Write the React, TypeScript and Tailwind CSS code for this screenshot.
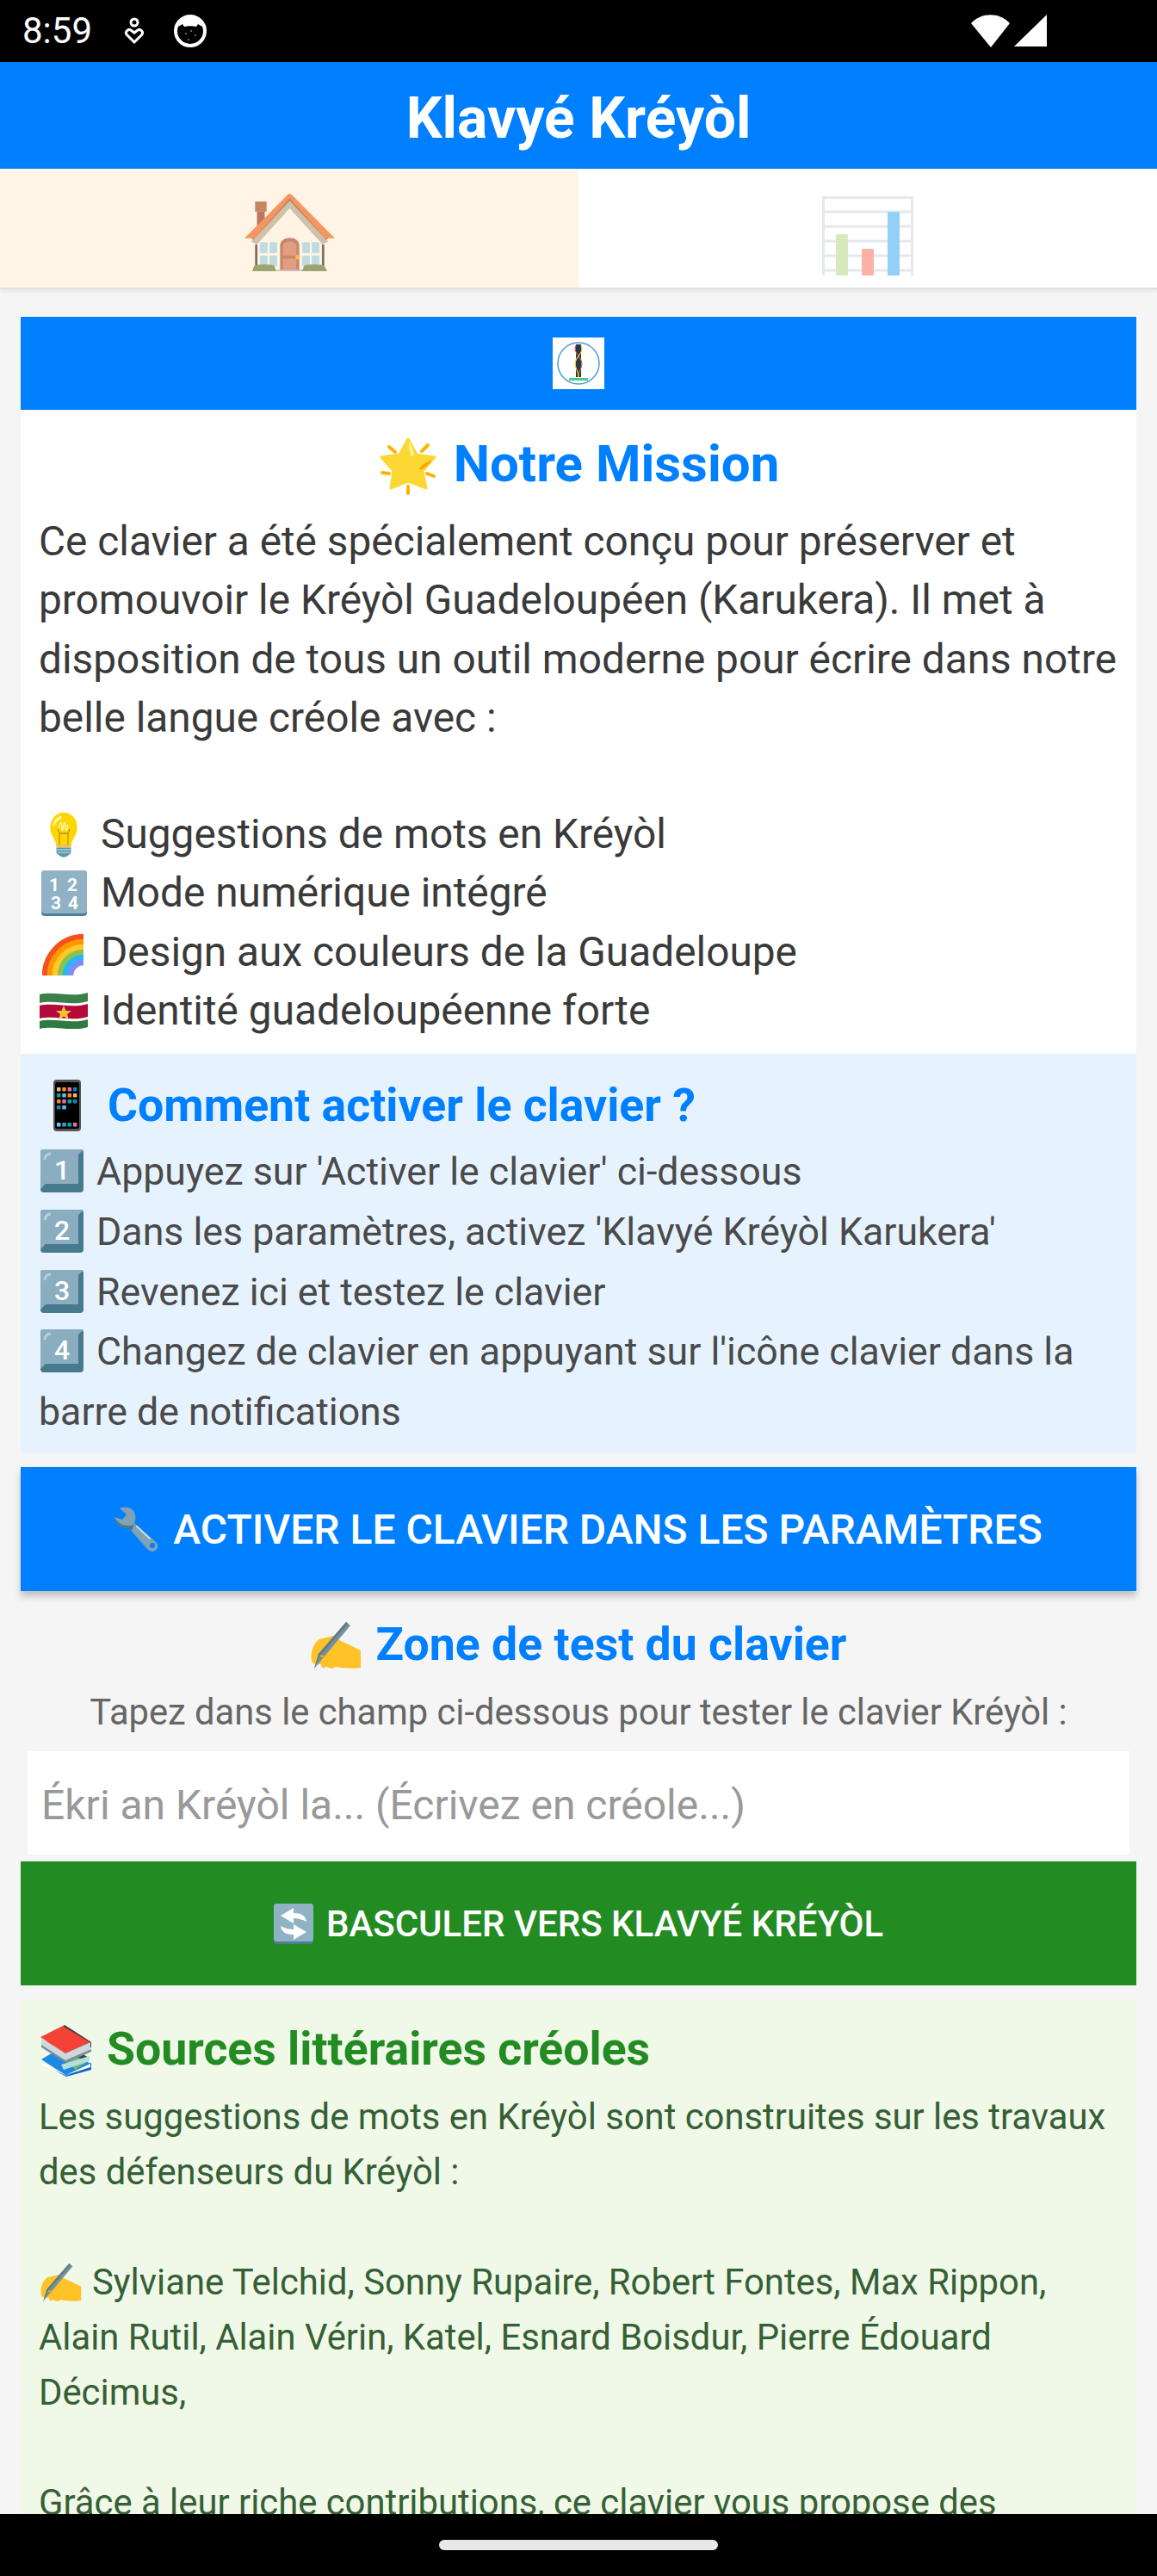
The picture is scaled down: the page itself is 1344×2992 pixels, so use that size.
import React from "react";

const Star = ({ className = "" }: { className?: string }) => (
  <svg viewBox="0 0 72 72" className={className}>
    <g stroke="#FFB300" strokeWidth="4" strokeLinecap="round">
      <path d="M13 13l7 6M58 11l-7 7M5 43l8 1M65 47l-8-3M35 59v8" />
    </g>
    <path d="M35 4L45 22 66 25 52 41 56 61 35 53 15 61 18 41 4 25 25 22Z" fill="#FDD835" stroke="#FDD835" strokeWidth="3" strokeLinejoin="round" />
    <path d="M36 7c3 4 5 10 6 16l-3 1c-2-5-3-11-3-17z" fill="#FFF59D" />
    <path d="M48 38c4-5 9-8 15-10-3 5-8 9-13 12z" fill="#F5A800" />
  </svg>
);

const House = () => (
  <svg viewBox="7 -3 94 99" preserveAspectRatio="none" className="w-[105px] h-[90px]">
    <rect x="20" y="20" width="8" height="22" fill="#B9785A" />
    <rect x="18" y="7" width="12" height="13" fill="#C68660" />
    <path d="M54 5L14 58l6 4L54 16l34 46 6-4z" fill="#D1C1A9" />
    <path d="M54 16L20 62v34h68V62z" fill="#FFF4E4" />
    <path d="M15 55L54 4l39 51" fill="none" stroke="#B98364" strokeWidth="2.500" />
    <path d="M52-2q2-2 4 0l45 56H91L54 3 17 54H7z" fill="#F59660" />
    <rect x="18" y="62" width="2.500" height="34" fill="#7D6E66" />
    <rect x="87.500" y="62" width="2.500" height="34" fill="#7D6E66" />
    <rect x="23" y="59" width="8" height="14" rx="1.500" fill="#BFDBDF" />
    <rect x="33" y="59" width="8" height="14" rx="1.500" fill="#BFDBDF" />
    <rect x="23" y="76" width="8" height="14" rx="1.500" fill="#BFDBDF" />
    <rect x="33" y="76" width="8" height="14" rx="1.500" fill="#BFDBDF" />
    <rect x="67" y="59" width="8" height="14" rx="1.500" fill="#BFDBDF" />
    <rect x="77" y="59" width="8" height="14" rx="1.500" fill="#BFDBDF" />
    <rect x="67" y="76" width="8" height="14" rx="1.500" fill="#BFDBDF" />
    <rect x="77" y="76" width="8" height="14" rx="1.500" fill="#BFDBDF" />
    <path d="M44 96V63c0-13 20-13 20 0v33z" fill="#C5886C" />
    <path d="M47 94V64c0-8 14-8 14 0v30z" fill="#E39C7E" />
    <rect x="47" y="76" width="14" height="4" fill="#C5886C" />
    <rect x="60" y="75" width="3.500" height="6" rx="1.500" fill="#FFC22D" />
    <rect x="40" y="94" width="28" height="2" fill="#C9C2B8" />
    <path d="M15 96l2-7c3-2 18-2 21 0l2 7zM67 96l2-7c3-2 18-2 21 0l3 7z" fill="#9EA46F" />
  </svg>
);

const Chart = () => (
  <svg viewBox="0 0 106 92" className="w-[106px] h-[92px]">
    <path d="M1.500 92V1.500h103V92M1 18h104M1 35h104M1 52h104M1 69h104M1 86h104" fill="none" stroke="#E4E9ED" strokeWidth="3" />
    <rect x="16" y="44" width="14" height="48" rx="1.500" fill="#D7E9BE" />
    <rect x="46" y="61" width="14" height="31" rx="1.500" fill="#FBB0A8" />
    <rect x="76" y="18" width="14" height="74" rx="1.500" fill="#93CFF7" />
  </svg>
);

const Logo = () => (
  <svg viewBox="0 0 60 60" className="w-[60px] h-[60px] bg-white">
    <circle cx="30" cy="30" r="24" fill="#fff" stroke="#4A9FD8" strokeWidth="1.500" />
    <rect x="27" y="8" width="6" height="38" fill="#1F3A52" />
    <path d="M27 9c-5 10 11 15 6 26-2 4-3 7-3 11" fill="none" stroke="#E74C3C" strokeWidth="1.200" />
    <path d="M33 9c5 10-11 15-6 26 2 4 3 7 3 11" fill="none" stroke="#F5C518" strokeWidth="1.200" />
    <rect x="19" y="47" width="22" height="3" fill="#4CCB7E" />
  </svg>
);

const Bulb = () => (
  <svg viewBox="0 0 48 64" preserveAspectRatio="none" className="w-[34px] h-[53px]">
    <path d="M24 1C11 1 2 10 2 22c0 11 8 15 10 25h24c2-10 10-14 10-25C46 10 37 1 24 1z" fill="#FFD600" />
    <path d="M8 18c2-6 6-9 11-10" stroke="#FFF59D" strokeWidth="4" fill="none" strokeLinecap="round" />
    <path d="M17 46V30l-3-6M31 46V30l3-6M18 30h12" stroke="#B77E2E" strokeWidth="1.500" fill="none" />
    <path d="M17 22c0-8 4-8 4 0s3 0 3-4 3-4 3 4 4 0 4-4" stroke="#fff" strokeWidth="1.500" fill="none" />
    <rect x="12" y="46" width="24" height="4" fill="#F2C14E" />
    <path d="M12 50h24v6c0 3-4 4-6 6-3 2-9 2-12 0-2-2-6-3-6-6z" fill="#5E9BAE" />
    <path d="M12 53h24M14 57h20" stroke="#B0D4DC" strokeWidth="1.500" />
  </svg>
);

const Num = ({ d }: { d: string }) => (
  <svg viewBox="0 0 50 50" width={50} height={50}>
    <rect width="50" height="50" rx="4" fill="#477A8C" />
    <path d="M2 0h48l-6 6v34H6L0 46V2c0-1 1-2 2-2z" fill="#8AAEBF" />
    <path d="M5 12c0-4 3-7 7-7" stroke="#B6D0DA" strokeWidth="3" fill="none" />
    <text x="25" y="35" textAnchor="middle" fontFamily="Roboto" fontWeight="500" fontSize="32" fill="#fff">{d}</text>
  </svg>
);

const Grid1234 = () => (
  <svg viewBox="0 0 53 53" className="w-[53px] h-[53px]">
    <rect width="53" height="53" rx="4" fill="#4E8094" />
    <rect width="53" height="50" rx="4" fill="#8FB2C4" />
    <g fontFamily="Roboto" fontWeight="700" fontSize="21" fill="#fff" textAnchor="middle">
      <text x="15" y="24">1</text>
      <text x="36" y="24">2</text>
      <text x="17" y="45">3</text>
      <text x="37" y="45">4</text>
    </g>
  </svg>
);

const Rainbow = () => (
  <svg viewBox="0 0 50 54" className="w-[50px] h-[54px]">
    <defs>
      <clipPath id="rb"><rect width="48" height="54" /></clipPath>
    </defs>
    {[
      ["#F4511E", 0],
      ["#FF9800", 6],
      ["#FFCA28", 12],
      ["#8BC34A", 18],
      ["#29B6F6", 24],
      ["#7E8CF8", 30],
    ].map(([c, o]) => (
      <circle key={c as string} cx="48" cy="54" r={Number(48 - (o as number)) - 3} fill="none" stroke={c as string} strokeWidth="6.500" clipPath="url(#rb)" />
    ))}
  </svg>
);

const Flag = () => (
  <svg viewBox="0 0 56 42" className="w-[56px] h-[42px]">
    <path d="M0 2c18-4 38 4 56-2v40c-18 6-38-2-56 2z" fill="#fff" />
    <path d="M0 2c18-4 38 4 56-2v10c-18 6-38-2-56 2z" fill="#3A8048" />
    <path d="M0 15c18-4 38 4 56-2v15c-18 6-38-2-56 2z" fill="#B5093A" />
    <path d="M0 33c18-4 38 4 56-2v9c-18 6-38-2-56 2z" fill="#2E7A42" />
    <path d="M28 15l2.500 6h6.500l-5 4 2 6.500-6-4-6 4 2-6.500-5-4h6.500z" fill="#F2C230" />
  </svg>
);

const Phone = () => (
  <svg viewBox="0 0 32 60" className="w-[32px] h-[60px]">
    <rect width="32" height="60" rx="4" fill="#555" />
    <rect x="2" y="3" width="28" height="54" rx="2" fill="#000" />
    {[
      ["#E8B36A", "#F08A24", "#EE6CA0", "#0B86C6"],
      ["#00A98F", "#6EB6DC", "#F08A24", "#E8B36A"],
      ["#F08A24", "#EE6CA0", "#00A98F", "#0B86C6"],
      ["#0B86C6", "#6EB6DC"],
    ].map((row, r) =>
      row.map((c, i) => <rect key={`${r}${i}`} x={4 + i * 6.300} y={9 + r * 7} width="4.500" height="4.500" fill={c} />)
    )}
    {["#6EC6F0", "#2F9ED0", "#00A98F", "#EE6CA0"].map((c, i) => (
      <rect key={c} x={4 + i * 6.300} y="50" width="4.500" height="4.500" fill={c} />
    ))}
  </svg>
);

const Wrench = () => (
  <svg viewBox="0 0 52 52" className="w-[52px] h-[52px]">
    <path d="M6 2C12-1 22 0 24 10c1 4 0 7-1 9l25 22c4 4 2 9-1 10-3 2-6 1-9-2L16 24C10 26 2 22 0 12l9 3 5-6z" fill="#7FA3B2" />
    <path d="M0 12c2 10 10 14 16 12l4 4 3-9c-1 2-4 4-8 3C8 22 3 18 0 12z" fill="#4F7480" />
    <path d="M26 23l15 14" stroke="#C5DDE4" strokeWidth="2" strokeLinecap="round" />
    <circle cx="44" cy="45" r="3" fill="#007fff" />
  </svg>
);

const Hand = ({ className = "" }: { className?: string }) => (
  <svg viewBox="0 0 59 55" className={className}>
    <path d="M1 46C-1 36 4 24 10 21l16-4 7 5 9 4 16 8v20c-8 2-22 0-30-1-2 3-8 2-10-1-2 4-6 3-6-2-6 0-10 0-11-4z" fill="#FFC328" />
    <path d="M41 1l5 4-31 37L4 55l5-17z" fill="#78909C" />
    <path d="M41 1l2 1.500L10 41 4 55l5-17z" fill="#5D7A8A" />
    <path d="M11 40l6 2" stroke="#F2AC10" strokeWidth="2" fill="none" />
  </svg>
);

const Cycle = () => (
  <svg viewBox="0 0 46 47" className="w-[46px] h-[47px]">
    <rect width="46" height="47" rx="3" fill="#4E7F92" />
    <rect width="46" height="44" rx="3" fill="#8FB2C4" />
    <path d="M38 21c-1-7-6-10-15-10V5L8 14l15 9v-6c5 0 9 1 15 4z" fill="#fff" />
    <path d="M8 26c1 7 6 10 15 10v6l15-9-15-9v6c-5 0-9-1-15-4z" fill="#fff" />
  </svg>
);

const Books = () => (
  <svg viewBox="0 0 60 60" className="w-[60px] h-[60px]">
    <path d="M1 44l29 15 29-15v8L30 60 1 44z" fill="#1565C0" />
    <path d="M1 40l20-12 38 17-29 14z" fill="#1E88E5" />
    <path d="M2 44l28 14 28-13v4L30 58 2 47z" fill="#fff" />
    <path d="M4 20l14-6 38 24-18 12z" fill="#424242" />
    <path d="M15 28l40 14-14 10-26-20z" fill="#66BB6A" />
    <path d="M24 46l33-10v6l-30 10z" fill="#B2DFDB" />
    <path d="M0 14L28 0l31 20-30 14z" fill="#F44336" />
    <path d="M28 0l31 20v6L30 40l-2-6 29-14L27 2z" fill="#424242" />
    <path d="M1 15l28 18 29-13v10L30 43 1 24z" fill="#CFD8DC" />
    <path d="M1 23l28 18 30-13v3L30 44 1 26z" fill="#78909C" />
  </svg>
);

const Step = ({ d, children }: { d: string; children: React.ReactNode }) => (
  <span className="block">
    <span className="inline-block align-[-9px] ml-[2px] mr-[15px]"><Num d={d} /></span>
    {children}
  </span>
);

export default function App() {
  return (
    <div className="flex flex-col h-[2992px] w-[1344px] overflow-hidden bg-[#f5f5f5] font-['Roboto',sans-serif]">
      <div className="h-[72px] bg-black shrink-0 flex items-center justify-between text-white">
        <div className="flex items-center pl-[26px]">
          <span className="text-[42px] leading-[48px] font-normal w-[80px]">8:59</span>
          <svg viewBox="0 0 24 32" className="w-[24px] h-[32px] ml-[38px]" fill="none" stroke="#fff" strokeWidth="3">
            <circle cx="12" cy="6" r="4" />
            <path d="M12 29L3 20c-2-3 2-7 5-5l4 3 4-3c3-2 7 2 5 5z" />
          </svg>
          <svg viewBox="0 0 38 38" className="w-[38px] h-[38px] ml-[34px]">
            <circle cx="19" cy="19" r="17" fill="#000" stroke="#fff" strokeWidth="4" />
            <path d="M5 14c2-8 8-11 14-11s12 3 14 11l-5-3-2 3c-4-1-10-1-14 0l-2-3z" fill="#fff" />
            <g fill="#888"><circle cx="14" cy="22" r="1" /><circle cx="20" cy="19" r="1" /><circle cx="25" cy="24" r="1" /><circle cx="17" cy="29" r="1" /></g>
          </svg>
        </div>
        <div className="flex items-center pr-[128px]">
          <svg viewBox="0 0 46 38" className="w-[46px] h-[38px]" fill="#fff"><path d="M0 10C12-3 33-3 45 10L23 38z" /></svg>
          <svg viewBox="0 0 38 38" className="w-[38px] h-[38px] ml-[4px]" fill="#fff"><path d="M38 0v37H0z" /></svg>
        </div>
      </div>

      <div className="h-[124px] shrink-0 bg-[#007fff] flex items-center justify-center pt-[6px]">
        <h1 className="text-[66px] leading-[77px] font-bold text-white">Klavyé Kréyòl</h1>
      </div>

      <div className="h-[140px] shrink-0 flex border-b-2 border-[#e0e0e0] bg-white shadow-[0_2px_4px_rgba(0,0,0,0.08)]">
        <div className="flex-1 bg-[#fff4e6] flex justify-center items-start pt-[29px]"><House /></div>
        <div className="flex-1 flex justify-center items-start pt-[32px]"><Chart /></div>
      </div>

      <div className="flex-1 overflow-hidden px-[24px] pt-[32px]">
        <div className="h-[108px] bg-[#007fff] flex items-center justify-center"><Logo /></div>

        <section className="bg-white h-[748px] pl-[21px] pr-[8px] pt-[24px]">
          <h2 className="flex items-center justify-center gap-[16px] text-[60px] leading-[70px] font-bold text-[#007fff] pr-[13px]">
            <Star className="w-[72px] h-[72px] mt-[6px]" />
            Notre Mission
          </h2>
          <p className="text-[47.800px] leading-[68.300px] text-[#3a3a3a] mt-[17px]">
            Ce clavier a été spécialement conçu pour préserver et promouvoir le Kréyòl Guadeloupéen (Karukera). Il met à disposition de tous un outil moderne pour écrire dans notre belle langue créole avec :
          </p>
          <div className="text-[47.800px] leading-[68.300px] text-[#3a3a3a] mt-[67px]">
            <div className="flex items-center gap-[14px]"><span className="w-[58px] flex justify-center"><Bulb /></span>Suggestions de mots en Kréyòl</div>
            <div className="flex items-center gap-[14px]"><span className="w-[58px] flex justify-center"><Grid1234 /></span>Mode numérique intégré</div>
            <div className="flex items-center gap-[14px]"><span className="w-[58px] flex justify-center"><Rainbow /></span>Design aux couleurs de la Guadeloupe</div>
            <div className="flex items-center gap-[14px]"><span className="w-[58px] flex justify-center"><Flag /></span>Identité guadeloupéenne forte</div>
          </div>
        </section>

        <section className="bg-[#e6f3ff] h-[464px] px-[21px] pt-[28px]">
          <h2 className="flex items-center text-[53.600px] leading-[64px] font-bold text-[#007fff]">
            <span className="w-[66px] flex justify-center mr-[14px]"><Phone /></span>
            Comment activer le clavier ?
          </h2>
          <div className="text-[44.700px] leading-[69.800px] text-[#4a4a4a] mt-[11px]">
            <Step d="1">Appuyez sur 'Activer le clavier' ci-dessous</Step>
            <Step d="2">Dans les paramètres, activez 'Klavyé Kréyòl Karukera'</Step>
            <Step d="3">Revenez ici et testez le clavier</Step>
            <Step d="4">Changez de clavier en appuyant sur l'icône clavier dans la barre de notifications</Step>
          </div>
        </section>

        <button className="mt-[16px] h-[144px] w-full bg-[#007fff] text-white text-[48px] font-medium flex items-center justify-center gap-[16px] shadow-[0_6px_8px_rgba(0,0,0,0.22)]">
          <Wrench />
          <span className="pt-[2px]">ACTIVER LE CLAVIER DANS LES PARAMÈTRES</span>
        </button>

        <section className="mt-[30px] px-[8px]">
          <h2 className="flex items-center justify-center gap-[17px] text-[53.600px] leading-[64px] font-bold text-[#007fff]">
            <Hand className="w-[59px] h-[55px]" />
            Zone de test du clavier
          </h2>
          <p className="text-center text-[41.700px] leading-[49px] text-[#666] mt-[22px]">Tapez dans le champ ci-dessous pour tester le clavier Kréyòl :</p>
          <div className="mt-[21px] h-[120px] bg-white flex items-center px-[16px] text-[48px] text-[#999] pt-[6px]">Ékri an Kréyòl la... (Écrivez en créole...)</div>
        </section>

        <button className="mt-[8px] h-[144px] w-full bg-[#228b22] text-white text-[42px] font-medium flex items-center justify-center gap-[15px]">
          <Cycle />
          BASCULER VERS KLAVYÉ KRÉYÒL
        </button>

        <section className="mt-[16px] bg-[#f0f8e8] rounded-[3px] px-[21px] pt-[26px] h-[700px]">
          <h2 className="flex items-center gap-[17px] text-[53.600px] leading-[64px] font-bold text-[#228b22]">
            <span className="ml-[2px] mt-[4px]"><Books /></span>
            Sources littéraires créoles
          </h2>
          <div className="text-[41.800px] leading-[64px] text-[#356035] mt-[15px]">
            <p>Les suggestions de mots en Kréyòl sont construites sur les travaux des défenseurs du Kréyòl :</p>
            <p className="mt-[64px]"><span className="inline-block align-[-8px] ml-[2px] mr-[12px]"><Hand className="w-[48px] h-[45px]" /></span>Sylviane Telchid, Sonny Rupaire, Robert Fontes, Max Rippon, Alain Rutil, Alain Vérin, Katel, Esnard Boisdur, Pierre Édouard Décimus,</p>
            <p className="mt-[64px]">Grâce à leur riche contributions, ce clavier vous propose des</p>
          </div>
        </section>
      </div>

      <div className="h-[72px] shrink-0 bg-black flex justify-center pt-[30px]">
        <div className="w-[324px] h-[12px] rounded-[6px] bg-[#e8e8e8]" />
      </div>
    </div>
  );
}
